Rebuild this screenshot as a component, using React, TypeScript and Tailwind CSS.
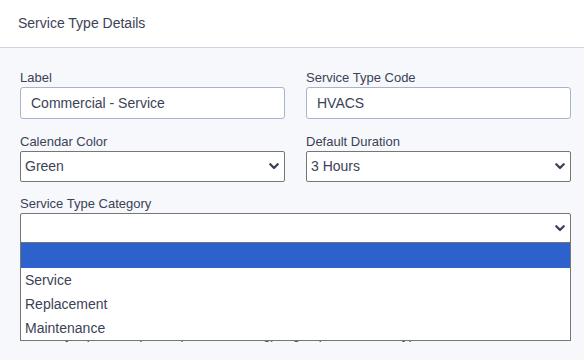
import React from "react";

const Chevron = () => (
  <svg width="10" height="7" viewBox="0 0 10 7" className="shrink-0">
    <path d="M1.3 1.3 L5 5 L8.7 1.3" fill="none" stroke="#3b4256" strokeWidth="2.3" strokeLinecap="round" strokeLinejoin="round" />
  </svg>
);

const Field = ({ label, children }: { label: string; children: React.ReactNode }) => (
  <div className="flex flex-col">
    <label className="text-[13px] leading-[16px] text-[#3b4256] mt-[2px] mb-[1px]">{label}</label>
    {children}
  </div>
);

const TextInput = ({ value }: { value: string }) => (
  <div className="h-[32px] bg-white border border-[#a9b3cb] rounded-[3px] flex items-center px-[10px] text-[14px] text-[#3b4256]">
    {value}
  </div>
);

const SelectBox = ({ value, h = "h-[31px]" }: { value: string; h?: string }) => (
  <div className={`${h} bg-white border border-[#767676] rounded-[2px] flex items-center justify-between pl-[4px] pr-[5px] text-[14px] text-[#3b4256]`}>
    <span>{value}</span>
    <Chevron />
  </div>
);

export default function App() {
  return (
    <div className="w-[584px] h-[360px] overflow-hidden bg-[#f7f8fc]" style={{ fontFamily: '"Liberation Sans", Arial, sans-serif' }}>
      <div className="h-[48px] bg-white border-b border-[#d0d5e3] flex items-center px-[18px]">
        <span className="text-[14px] text-[#3b4256]">Service Type Details</span>
      </div>
      <div className="pl-[20px] pr-[13px] pt-[20px] grid grid-cols-2 gap-x-[21px] gap-y-[13px]">
        <Field label="Label"><TextInput value="Commercial - Service" /></Field>
        <Field label="Service Type Code"><TextInput value="HVACS" /></Field>
        <Field label="Calendar Color"><SelectBox value="Green" /></Field>
        <Field label="Default Duration"><SelectBox value="3 Hours" /></Field>
        <div className="col-span-2 relative -mt-[1px]">
          <Field label="Service Type Category"><SelectBox value="" h="h-[30px]" /></Field>
          <div className="pt-[84px] pl-[4px] text-[13px] leading-[16px] text-[#3b4256]">
            Used by reports, dispatch, (and scheduling) to group this service type.
          </div>
          <div className="absolute left-0 right-0 top-[48px] bg-white border border-[#767676] text-[14px] text-[#3b4256]">
            <div className="h-[25px] bg-[#2d62cc]" />
            <div className="h-[24px] flex items-center pl-[4px]">Service</div>
            <div className="h-[24px] flex items-center pl-[4px]">Replacement</div>
            <div className="h-[24px] flex items-center pl-[4px]">Maintenance</div>
          </div>
        </div>
      </div>
    </div>
  );
}
